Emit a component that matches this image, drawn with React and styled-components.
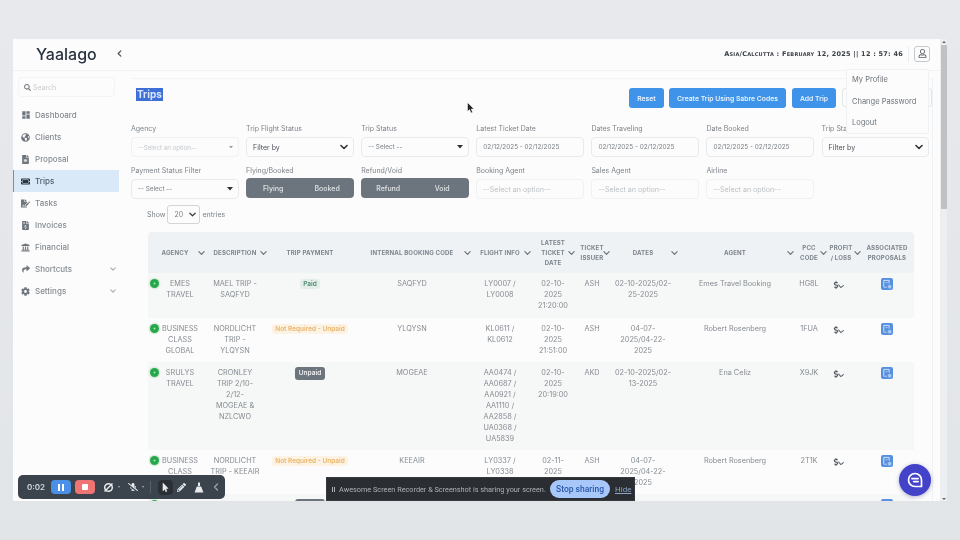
import { createGlobalStyle, styled } from "styled-components";
import {
  FaCog,
  FaFileAlt,
  FaFileInvoiceDollar,
  FaFileSignature,
  FaDollarSign,
  FaGlobeAmericas,
  FaMicrophoneSlash,
  FaMousePointer,
  FaPencilAlt,
  FaSearch,
  FaShare,
  FaTicketAlt,
  FaUniversity,
  FaRegUser,
  FaPlus,
} from "react-icons/fa";
import { MdDashboard } from "react-icons/md";

const Global = createGlobalStyle`
  html, body {
    margin: 0;
    padding: 0;
    background: #e4e7ea;
    overflow: hidden;
  }
  * { box-sizing: border-box; }
`;

const Chevron = ({ size = 7, color = "#6c757d", dir = "down", width = 1.4 }) => (
  <svg width={size} height={size} viewBox="0 0 8 8" fill="none">
    <path
      d={dir === "down" ? "M1 2.5 L4 5.5 L7 2.5" : "M5.5 1 L2.5 4 L5.5 7"}
      stroke={color}
      strokeWidth={width}
      strokeLinecap="round"
      strokeLinejoin="round"
    />
  </svg>
);

const Caret = ({ color = "#333", size = 6 }) => (
  <svg width={size} height={size * 0.67} viewBox="0 0 6 4">
    <path d="M0 0 H6 L3 3.6 Z" fill={color} />
  </svg>
);

const navItems = [
  { label: "Dashboard", icon: <MdDashboard size={10} /> },
  { label: "Clients", icon: <FaGlobeAmericas size={9} /> },
  { label: "Proposal", icon: <FaFileAlt size={9} /> },
  { label: "Trips", icon: <FaTicketAlt size={9} />, active: true },
  { label: "Tasks", icon: <FaFileSignature size={9} /> },
  { label: "Invoices", icon: <FaFileInvoiceDollar size={9} /> },
  { label: "Financial", icon: <FaUniversity size={9} /> },
  { label: "Shortcuts", icon: <FaShare size={8} />, more: true },
  { label: "Settings", icon: <FaCog size={9} />, more: true },
];

const columns = [
  { label: "Agency", w: 60, pl: 4, pr: 10, arrow: 3.5 },
  { label: "Description", w: 54, arrow: -4.5 },
  { label: "Trip Payment", w: 96 },
  { label: "Internal Booking Code", w: 108, arrow: -4.5 },
  { label: "Flight Info", w: 68, arrow: 3.5 },
  { label: "Latest\nTicket\nDate", w: 38, arrow: -2.5 },
  { label: "Ticket\nIssuer", w: 40, arrow: 2.5 },
  { label: "Dates", w: 62, arrow: -3.5 },
  { label: "Agent", w: 122, arrow: 2.5 },
  { label: "PCC\nCode", w: 26, arrow: -4.5 },
  { label: "Profit\n/ Loss", w: 38, arrow: -0.5 },
  { label: "Associated\nProposals", w: 54 },
];

const rows = [
  {
    agency: "EMES\nTRAVEL",
    description: "MAEL TRIP -\nSAQFYD",
    payment: "Paid",
    code: "SAQFYD",
    flight: "LY0007 /\nLY0008",
    ticket: "02-10-\n2025\n21:20:00",
    issuer: "ASH",
    dates: "02-10-2025/02-\n25-2025",
    agent: "Emes Travel Booking",
    pcc: "HG8L",
  },
  {
    agency: "BUSINESS\nCLASS\nGLOBAL",
    description: "NORDLICHT\nTRIP -\nYLQYSN",
    payment: "Not Required - Unpaid",
    code: "YLQYSN",
    flight: "KL0611 /\nKL0612",
    ticket: "02-10-\n2025\n21:51:00",
    issuer: "ASH",
    dates: "04-07-\n2025/04-22-\n2025",
    agent: "Robert Rosenberg",
    pcc: "1FUA",
  },
  {
    agency: "SRULYS\nTRAVEL",
    description: "CRONLEY\nTRIP 2/10-\n2/12-\nMOGEAE &\nNZLCWO",
    payment: "Unpaid",
    code: "MOGEAE",
    flight: "AA0474 /\nAA0687 /\nAA0921 /\nAA1110 /\nAA2858 /\nUA0368 /\nUA5839",
    ticket: "02-10-\n2025\n20:19:00",
    issuer: "AKD",
    dates: "02-10-2025/02-\n13-2025",
    agent: "Ena Celiz",
    pcc: "X9JK",
  },
  {
    agency: "BUSINESS\nCLASS\nGLOBAL",
    description: "NORDLICHT\nTRIP - KEEAIR",
    payment: "Not Required - Unpaid",
    code: "KEEAIR",
    flight: "LY0337 /\nLY0338",
    ticket: "02-11-\n2025",
    issuer: "ASH",
    dates: "04-07-\n2025/04-22-\n2025",
    agent: "Robert Rosenberg",
    pcc: "2T1K",
  },
  { payment: "Unpaid" },
];

const ProfitIcon = () => (
  <ProfitMark>
    <FaDollarSign size={8} />
    <svg width="6" height="5" viewBox="0 0 6 5" fill="none">
      <path d="M0.7 1 L2.8 3.6 L5.4 1.6" stroke="#5a6168" strokeWidth="1.1" strokeLinecap="round" />
    </svg>
  </ProfitMark>
);

const ProposalIcon = () => (
  <svg width="12" height="12" viewBox="0 0 13 13">
    <rect width="13" height="13" rx="2.2" fill="#5590e0" />
    <path d="M3 9.5 V2.6 H8.8 V6" fill="none" stroke="#dbe8fa" strokeWidth="1" />
    <path d="M3 10 H6.2 M5 5 H7" fill="none" stroke="#dbe8fa" strokeWidth="0.8" />
    <circle cx="9.4" cy="9.4" r="2.4" fill="#a9c8f0" stroke="#5590e0" strokeWidth="0.7" />
  </svg>
);

const StatusBadge = ({ value }) => {
  if (value === "Paid") return <Badge $bg="#e3eeea" $fg="#4f8a6e">{value}</Badge>;
  if (value === "Unpaid") return <Badge $bg="#6c757d" $fg="#eef0f2" $tall>{value}</Badge>;
  return <Badge $bg="#fdf3e4" $fg="#eab467">{value}</Badge>;
};

export default function App() {
  return (
    <Page>
      <Global />
      <AppWindow>
        <Main>
          <TopBar>
            <BrandBlock>
              <Brand>Yaalago</Brand>
              <Chevron size={7} dir="left" color="#555" width={1.5} />
            </BrandBlock>
            <Clock>Asia/Calcutta : February 12, 2025 || 12 : 57: 46</Clock>
            <UserButton>
              <FaRegUser size={9} />
            </UserButton>
          </TopBar>

          <Body>
            <Sidebar>
              <SearchBox>
                <FaSearch size={7} />
                <span>Search</span>
              </SearchBox>
              <Nav>
                {navItems.map((item) => (
                  <NavItem key={item.label} $active={item.active}>
                    <NavIcon $active={item.active}>{item.icon}</NavIcon>
                    <NavLabel $active={item.active}>{item.label}</NavLabel>
                    {item.more && <Chevron size={6} color="#a4aab0" />}
                  </NavItem>
                ))}
              </Nav>
            </Sidebar>

            <Content>
              <Card>
                <HeadRow>
                  <TitleWrap>
                    <Title>Trips</Title>
                  </TitleWrap>
                  <BlueButton $w={35}>Reset</BlueButton>
                  <BlueButton $w={117}>Create Trip Using Sabre Codes</BlueButton>
                  <BlueButton $w={44} $ml={1}>Add Trip</BlueButton>
                  <SearchInput>Search</SearchInput>
                </HeadRow>

                <Filters>
                  <Field label="Agency">
                    <Select $tone="faint">
                      <span>--Select an option--</span>
                      <Caret color="#999" size={4} />
                    </Select>
                  </Field>
                  <Field label="Trip Flight Status">
                    <Select $tone="strong">
                      <span>Filter by</span>
                      <Chevron size={8} color="#333" width={1.6} />
                    </Select>
                  </Field>
                  <Field label="Trip Status">
                    <Select>
                      <span>-- Select --</span>
                      <Caret />
                    </Select>
                  </Field>
                  <Field label="Latest Ticket Date">
                    <Select>02/12/2025 - 02/12/2025</Select>
                  </Field>
                  <Field label="Dates Traveling">
                    <Select>02/12/2025 - 02/12/2025</Select>
                  </Field>
                  <Field label="Date Booked">
                    <Select>02/12/2025 - 02/12/2025</Select>
                  </Field>
                  <Field label="Trip Status">
                    <Select $tone="strong">
                      <span>Filter by</span>
                      <Chevron size={8} color="#333" width={1.6} />
                    </Select>
                  </Field>

                  <Field label="Payment Status Filter">
                    <Select>
                      <span>-- Select --</span>
                      <Caret />
                    </Select>
                  </Field>
                  <Field label="Flying/Booked">
                    <Toggle>
                      <span>Flying</span>
                      <span>Booked</span>
                    </Toggle>
                  </Field>
                  <Field label="Refund/Void">
                    <Toggle>
                      <span>Refund</span>
                      <span>Void</span>
                    </Toggle>
                  </Field>
                  <Field label="Booking Agent">
                    <Select $tone="placeholder">--Select an option--</Select>
                  </Field>
                  <Field label="Sales Agent">
                    <Select $tone="placeholder">--Select an option--</Select>
                  </Field>
                  <Field label="Airline">
                    <Select $tone="placeholder">--Select an option--</Select>
                  </Field>
                </Filters>

                <ShowRow>
                  <span>Show</span>
                  <PageSize>
                    <span>20</span>
                    <Chevron size={7} color="#444" width={1.5} />
                  </PageSize>
                  <span>entries</span>
                </ShowRow>

                <Table>
                  <colgroup>
                    {columns.map((c) => (
                      <Col key={c.label} $w={c.w} />
                    ))}
                  </colgroup>
                  <thead>
                    <tr>
                      {columns.map((c) => (
                        <Th key={c.label} $pl={c.pl} $pr={c.pr}>
                          {c.label}
                          {c.arrow !== undefined && (
                            <SortArrow $right={c.arrow}>
                              <Chevron size={7} />
                            </SortArrow>
                          )}
                        </Th>
                      ))}
                    </tr>
                  </thead>
                  <tbody>
                    {rows.map((r, i) => (
                      <Row key={i} $odd={i % 2 === 0}>
                        <AgencyCell>
                          <Expander>
                            <FaPlus size={3} />
                          </Expander>
                          {r.agency}
                        </AgencyCell>
                        <Td>{r.description}</Td>
                        <Td>
                          <StatusBadge value={r.payment} />
                        </Td>
                        <Td>{r.code}</Td>
                        <Td>{r.flight}</Td>
                        <Td>{r.ticket}</Td>
                        <Td>{r.issuer}</Td>
                        <Td>{r.dates}</Td>
                        <Td>{r.agent}</Td>
                        <Td>{r.pcc}</Td>
                        <ProfitCell>
                          <ProfitIcon />
                        </ProfitCell>
                        <Td>
                          <ProposalIcon />
                        </Td>
                      </Row>
                    ))}
                  </tbody>
                </Table>
              </Card>
            </Content>
          </Body>
        </Main>

        <Scrollbar>
          <ScrollArrow $up />
          <ScrollThumb />
          <ScrollArrow />
        </Scrollbar>

        <ProfileMenu>
          <MenuItem>My Profile</MenuItem>
          <MenuItem>Change Password</MenuItem>
          <MenuItem>Logout</MenuItem>
        </ProfileMenu>
      </AppWindow>

      <Pointer width="8" height="12" viewBox="0 0 8 12">
        <path d="M0.5 0.5 V9.5 L2.6 7.6 L4 11 L5.6 10.3 L4.2 7 H7 Z" fill="#222" stroke="#fff" strokeWidth="0.5" />
      </Pointer>

      <Recorder>
        <Timer>0:02</Timer>
        <RecButton $bg="#4a8fe8">
          <PauseBars />
        </RecButton>
        <RecButton $bg="#ef7474">
          <StopSquare />
        </RecButton>
        <RecTool $ml={4}>
          <svg width="11" height="11" viewBox="0 0 11 11" fill="none">
            <circle cx="5.5" cy="5.5" r="3.8" stroke="#e8eaec" strokeWidth="1.5" />
            <path d="M1.5 9.5 L9.5 1.5" stroke="#e8eaec" strokeWidth="1.4" />
          </svg>
        </RecTool>
        <RecCaret />
        <RecTool $ml={8}>
          <FaMicrophoneSlash size={10} />
        </RecTool>
        <RecCaret />
        <RecDivider />
        <CursorTool>
          <FaMousePointer size={9} />
        </CursorTool>
        <RecTool $ml={4}>
          <FaPencilAlt size={9} />
        </RecTool>
        <RecTool $ml={8}>
          <svg width="10" height="11" viewBox="0 0 10 11">
            <path d="M4 0.5 H6 V4 H4 Z M2.8 4.6 H7.2 L9.4 10.5 H0.6 Z" fill="#e8eaec" />
          </svg>
        </RecTool>
        <RecTool $ml={8}>
          <Chevron size={8} dir="left" color="#99a0a8" />
        </RecTool>
      </Recorder>

      <ShareBar>
        <PauseGlyph />
        <ShareText>Awesome Screen Recorder &amp; Screenshot is sharing your screen.</ShareText>
        <StopSharing>Stop sharing</StopSharing>
        <HideLink>Hide</HideLink>
      </ShareBar>

      <ChatFab>
        <svg width="16" height="16" viewBox="0 0 16 16" fill="none">
          <path
            d="M8 1.5 A6.5 6.5 0 0 1 14.5 8 V14.5 H8 A6.5 6.5 0 0 1 8 1.5 Z"
            stroke="#fff"
            strokeWidth="1.7"
            strokeLinejoin="round"
          />
          <path d="M4.8 6.6 H11.2 M6.6 9.6 H11.2" stroke="#fff" strokeWidth="1.6" strokeLinecap="round" />
        </svg>
      </ChatFab>
    </Page>
  );
}

const Field = ({ label, children }) => (
  <FieldWrap>
    <FieldLabel>{label}</FieldLabel>
    {children}
  </FieldWrap>
);

const Page = styled.div`
  position: relative;
  width: 960px;
  height: 540px;
  padding: 39px 13px;
  background: linear-gradient(180deg, #e7e9ec 0%, #e2e5e8 100%);
  font-family: Inter, "Noto Sans", sans-serif;
  overflow: hidden;
  filter: blur(0.5px);
`;

const AppWindow = styled.div`
  position: relative;
  display: flex;
  width: 934px;
  height: 462px;
  background: #fcfcfc;
  overflow: hidden;
`;

const Main = styled.div`
  flex: 1;
  min-width: 0;
  display: flex;
  flex-direction: column;
`;

const TopBar = styled.header`
  display: flex;
  align-items: center;
  height: 32px;
  flex: none;
  padding: 0 10px 2px 23px;
  border-bottom: 1px solid #f1f2f3;
`;

const BrandBlock = styled.div`
  display: flex;
  align-items: center;
  gap: 19px;
  margin-right: auto;
`;

const Brand = styled.div`
  font-size: 16px;
  font-weight: 500;
  color: #2b3440;
  line-height: 28px;
`;

const Clock = styled.div`
  font-family: "DejaVu Sans", sans-serif;
  font-size: 6.5px;
  font-weight: 700;
  font-variant: small-caps;
  letter-spacing: 0.25px;
  color: #3a3f45;
  padding-right: 5px;
  margin-right: 5px;
  border-right: 1px solid #eceef0;
  line-height: 16px;
`;

const UserButton = styled.div`
  display: flex;
  align-items: center;
  justify-content: center;
  width: 16px;
  height: 16px;
  border: 1px solid #c6c9cc;
  border-radius: 3px;
  color: #555c64;
`;

const Body = styled.div`
  flex: 1;
  min-height: 0;
  display: flex;
`;

const Sidebar = styled.aside`
  width: 106px;
  flex: none;
  padding-top: 6px;
`;

const SearchBox = styled.div`
  display: flex;
  align-items: center;
  gap: 2px;
  height: 20px;
  margin: 0 4px 0 5px;
  padding-left: 5px;
  border: 1px solid #f3f4f5;
  border-radius: 4px;
  font-size: 7px;
  color: #c8cbcf;
  svg {
    color: #777d84;
  }
`;

const Nav = styled.nav`
  display: flex;
  flex-direction: column;
  margin-top: 7px;
`;

const NavItem = styled.div`
  display: flex;
  align-items: center;
  height: 22px;
  padding: 0 3px 0 ${(p) => (p.$active ? "6px" : "7px")};
  background: ${(p) => (p.$active ? "#d9e9f8" : "transparent")};
  border-left: ${(p) => (p.$active ? "1px solid #4f97e6" : "none")};
`;

const NavIcon = styled.span`
  display: flex;
  justify-content: center;
  width: 11px;
  margin-right: 4px;
  color: ${(p) => (p.$active ? "#2c3540" : "#6f767d")};
`;

const NavLabel = styled.span`
  flex: 1;
  font-size: 8px;
  font-weight: 500;
  color: ${(p) => (p.$active ? "#4f5a65" : "#858b92")};
`;

const Content = styled.main`
  flex: 1;
  min-width: 0;
  padding: 7px 7px 0 12px;
`;

const Card = styled.div`
  height: 100%;
  padding: 9px 0 0;
  border-top: 1px solid #f3f4f5;
  border-right: 1px solid #f0f1f2;
`;

const HeadRow = styled.div`
  display: flex;
  align-items: flex-start;
  height: 20px;
  gap: 5px;
  margin-bottom: 16px;
`;

const TitleWrap = styled.div`
  display: flex;
  flex: 1;
  padding-left: 5px;
`;

const Title = styled.span`
  padding: 0 1px;
  background: #3d6fd6;
  color: #dbe6fa;
  font-size: 10px;
  font-weight: 700;
  line-height: 13px;
`;

const BlueButton = styled.div`
  display: flex;
  align-items: center;
  justify-content: center;
  width: ${(p) => p.$w}px;
  height: 20px;
  margin-left: ${(p) => p.$ml ?? 0}px;
  background: #3f94ea;
  border-radius: 3px;
  color: #eaf3fd;
  font-size: 6.8px;
  font-weight: 600;
  white-space: nowrap;
`;

const SearchInput = styled.div`
  display: flex;
  align-items: center;
  width: 90px;
  height: 19px;
  margin-left: 1px;
  padding-left: 3px;
  border: 1px solid #e2e4e6;
  border-radius: 3px;
  font-size: 7px;
  color: #a2a8ae;
`;

const Filters = styled.div`
  display: grid;
  grid-template-columns: repeat(6, 108px) 107px;
  column-gap: 7.1px;
  row-gap: 9px;
  width: 800px;
`;

const FieldWrap = styled.div`
  display: flex;
  flex-direction: column;
`;

const FieldLabel = styled.div`
  height: 10px;
  margin-bottom: 3px;
  font-size: 7px;
  line-height: 10px;
  color: #7d8389;
  white-space: nowrap;
`;

const selectTones = {
  faint: { size: "6.2px", color: "#c4c8cc", border: "#f0f1f2" },
  placeholder: { size: "7.1px", color: "#bcc0c4", border: "#f0f1f2" },
  strong: { size: "7px", color: "#4a5056", border: "#e8eaec" },
  plain: { size: "6.4px", color: "#7b8187", border: "#e8eaec" },
};

const Select = styled.div`
  display: flex;
  align-items: center;
  justify-content: space-between;
  height: 20px;
  padding: 0 5px 0 6px;
  border: 1px solid ${(p) => selectTones[p.$tone ?? "plain"].border};
  border-radius: 4px;
  font-size: ${(p) => selectTones[p.$tone ?? "plain"].size};
  color: ${(p) => selectTones[p.$tone ?? "plain"].color};
  white-space: nowrap;
`;

const Toggle = styled.div`
  display: flex;
  align-items: center;
  height: 20px;
  margin-top: -1px;
  background: #6c757d;
  border-radius: 4px;
  font-size: 7px;
  font-weight: 500;
  color: #e0e3e6;
  span {
    flex: 1;
    text-align: center;
  }
`;

const ShowRow = styled.div`
  display: flex;
  align-items: center;
  gap: 2px;
  height: 17px;
  margin: 7px 0 9px 16px;
  font-size: 7px;
  color: #7b8187;
`;

const PageSize = styled.div`
  display: flex;
  align-items: center;
  justify-content: space-between;
  width: 33px;
  height: 19px;
  padding: 0 3px 0 6px;
  border: 1px solid #d2d5d8;
  border-radius: 3px;
`;

const Table = styled.table`
  width: 766px;
  margin-left: 17px;
  table-layout: fixed;
  border-collapse: collapse;
`;

const Col = styled.col`
  width: ${(p) => p.$w}px;
`;

const Th = styled.th`
  position: relative;
  height: 41px;
  padding: 0 ${(p) => p.$pr ?? 0}px 0 ${(p) => p.$pl ?? 0}px;
  background: #eef2f5;
  font-size: 6.1px;
  font-weight: 700;
  line-height: 10px;
  letter-spacing: 0.15px;
  text-transform: uppercase;
  text-align: center;
  white-space: pre;
  color: #7d858d;
  &:first-child {
    border-top-left-radius: 4px;
  }
  &:last-child {
    border-top-right-radius: 4px;
  }
`;

const SortArrow = styled.span`
  position: absolute;
  z-index: 1;
  top: 50%;
  right: ${(p) => p.$right}px;
  display: flex;
  transform: translateY(-50%);
`;

const Row = styled.tr`
  background: ${(p) => (p.$odd ? "#f6f7f7" : "#fcfcfc")};
`;

const Td = styled.td`
  height: 44.5px;
  padding: 5px 0 5.5px;
  vertical-align: top;
  text-align: center;
  white-space: pre;
  font-size: 7.3px;
  line-height: 11px;
  color: #868c92;
`;

const AgencyCell = styled(Td)`
  position: relative;
  padding-left: 10px;
  padding-right: 6px;
`;

const ProfitCell = styled(Td)`
  text-align: left;
  padding-left: 10px;
`;

const Expander = styled.span`
  position: absolute;
  top: 6px;
  left: 2px;
  display: flex;
  align-items: center;
  justify-content: center;
  width: 9px;
  height: 9px;
  border-radius: 50%;
  background: #25a84a;
  box-shadow: 0 0 0 1.5px #dcecdf;
  color: #cfeed8;
`;

const Badge = styled.span`
  display: inline-block;
  padding: ${(p) => (p.$tall ? "2px 4px" : "0 3px")};
  margin-top: ${(p) => (p.$tall ? "0" : "1px")};
  border-radius: 3px;
  background: ${(p) => p.$bg};
  color: ${(p) => p.$fg};
  font-size: 6.5px;
  font-weight: 600;
  line-height: ${(p) => (p.$tall ? "9px" : "10px")};
`;

const ProfitMark = styled.span`
  display: inline-flex;
  align-items: flex-end;
  height: 11px;
  color: #555c64;
  svg:last-child {
    margin-left: -2px;
  }
`;

const Scrollbar = styled.div`
  display: flex;
  flex-direction: column;
  align-items: center;
  width: 7px;
  flex: none;
  background: #eceef0;
`;

const ScrollArrow = styled.div`
  width: 0;
  height: 0;
  flex: none;
  margin: ${(p) => (p.$up ? "2px 0 2px" : "auto 0 1px")};
  border-left: 2px solid transparent;
  border-right: 2px solid transparent;
  border-bottom: ${(p) => (p.$up ? "2px solid #666" : "none")};
  border-top: ${(p) => (p.$up ? "none" : "2px solid #666")};
`;

const ScrollThumb = styled.div`
  width: 6px;
  height: 164px;
  background: #bfc1c3;
`;

const ProfileMenu = styled.div`
  position: absolute;
  top: 30px;
  right: 18px;
  width: 83px;
  height: 65px;
  display: flex;
  flex-direction: column;
  gap: 3.5px;
  padding: 1px 5px 0;
  background: #fcfcfc;
  border: 1px solid #f0f1f2;
  border-radius: 2px;
`;

const MenuItem = styled.div`
  font-size: 7.5px;
  line-height: 18px;
  color: #6e747a;
  white-space: nowrap;
`;

const Pointer = styled.svg`
  position: absolute;
  left: 467px;
  top: 102px;
`;

const Recorder = styled.div`
  position: absolute;
  left: 18px;
  top: 475px;
  width: 207px;
  height: 24px;
  display: flex;
  align-items: center;
  padding-left: 9px;
  background: #3b434c;
  border-radius: 5px;
  color: #e8eaec;
`;

const Timer = styled.span`
  width: 24px;
  font-size: 8px;
  font-weight: 600;
  color: #d8dbde;
`;

const RecButton = styled.div`
  display: flex;
  align-items: center;
  justify-content: center;
  width: 20px;
  height: 14px;
  margin-right: 4px;
  background: ${(p) => p.$bg};
  border-radius: 4px;
`;

const PauseBars = styled.span`
  width: 6px;
  height: 7px;
  border-left: 2px solid #fff;
  border-right: 2px solid #fff;
`;

const StopSquare = styled.span`
  width: 6px;
  height: 6px;
  background: #fff;
  border-radius: 1px;
`;

const RecTool = styled.span`
  display: flex;
  margin-left: ${(p) => p.$ml}px;
`;

const RecCaret = styled.span`
  margin-left: 4px;
  border-left: 1.5px solid transparent;
  border-right: 1.5px solid transparent;
  border-top: 2px solid #aab0b6;
`;

const RecDivider = styled.span`
  width: 1px;
  height: 12px;
  margin-left: 6px;
  background: #565e67;
`;

const CursorTool = styled.span`
  display: flex;
  align-items: center;
  justify-content: center;
  width: 15px;
  height: 15px;
  margin-left: 7px;
  background: #2b3036;
  border-radius: 4px;
`;

const ShareBar = styled.div`
  position: absolute;
  left: 326px;
  top: 477px;
  width: 309px;
  height: 24px;
  display: flex;
  align-items: center;
  padding-left: 5px;
  background: #2a2d31;
  border: 1px solid #36393d;
`;

const PauseGlyph = styled.span`
  width: 3px;
  height: 5px;
  margin-right: 4px;
  border-left: 1px solid #aeb2b6;
  border-right: 1px solid #aeb2b6;
`;

const ShareText = styled.span`
  width: 211px;
  font-family: Roboto, sans-serif;
  font-size: 7.3px;
  color: #aeb2b6;
  white-space: nowrap;
`;

const StopSharing = styled.span`
  display: flex;
  align-items: center;
  justify-content: center;
  width: 60px;
  height: 18px;
  background: #a8c7fa;
  border-radius: 9px;
  font-family: Roboto, sans-serif;
  font-size: 8.5px;
  font-weight: 500;
  color: #2a5aa8;
`;

const HideLink = styled.span`
  margin-left: 5px;
  font-family: Roboto, sans-serif;
  font-size: 8px;
  color: #8fa6c8;
  text-decoration: underline;
`;

const ChatFab = styled.div`
  position: absolute;
  left: 899px;
  top: 464px;
  width: 32px;
  height: 32px;
  display: flex;
  align-items: center;
  justify-content: center;
  border-radius: 50%;
  background: #4243c9;
  box-shadow: 0 1px 4px rgba(40, 40, 120, 0.35);
`;
